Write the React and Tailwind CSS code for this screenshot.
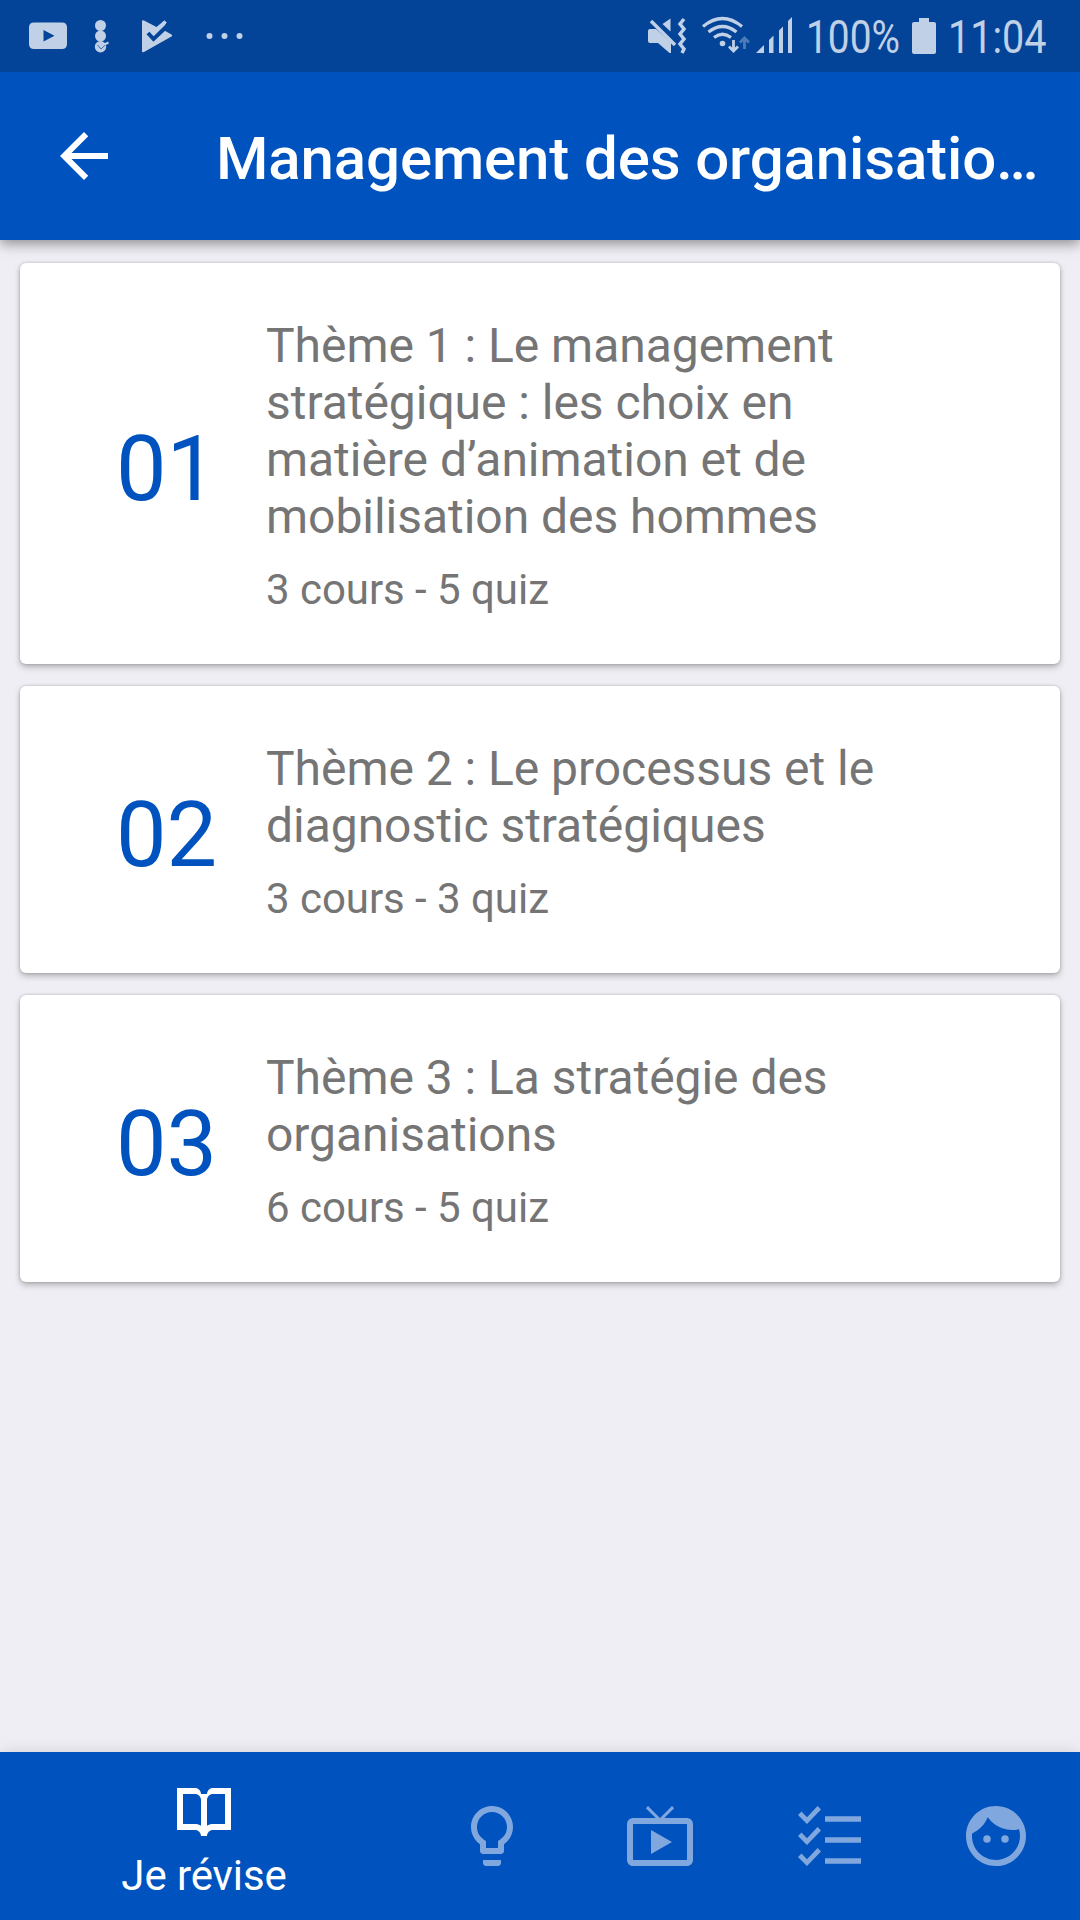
import { MdArrowBack, MdFace, MdLightbulbOutline, MdLiveTv } from "react-icons/md";

const themes = [
  {
    number: "01",
    title: "Thème 1 : Le management stratégique : les choix en matière d’animation et de mobilisation des hommes",
    info: "3 cours - 5 quiz",
  },
  {
    number: "02",
    title: "Thème 2 : Le processus et le diagnostic stratégiques",
    info: "3 cours - 3 quiz",
  },
  {
    number: "03",
    title: "Thème 3 : La stratégie des organisations",
    info: "6 cours - 5 quiz",
  },
];

function NotificationIcons() {
  return (
    <svg className="w-[270px] h-[72px]" viewBox="0 0 270 72" fill="currentColor">
      {/* youtube */}
      <path fillRule="evenodd" d="M34 22.500h28q5 0 5 5v16.500q0 5-5 5h-28q-5 0-5-5v-16.500q0-5 5-5zM43.500 30v11.500l11-5.700z" />
      {/* stacked dots */}
      <circle cx="100.500" cy="25.500" r="5.500" />
      <circle cx="100.500" cy="36" r="5.500" />
      <circle cx="100.500" cy="46.800" r="5.700" />
      <path d="M97.500 45l3.500 4l6.500-6" fill="none" stroke="#034499" strokeWidth="0.700" />
      <path d="M104.500 44.500l4-2" stroke="currentColor" strokeWidth="2" />
      {/* play with a check */}
      <path d="M142 21.500q0-2 2-1l12.500 6.500l7.800-6.500l2.200 2l-3 7.500l8 4.500q1.500 1 0 2l-27.500 15.500q-2 1-2-1z" />
      <path d="M148 33l5.500 6l11.500-11l3.500-4" fill="none" stroke="#034499" strokeWidth="4" />
      <path d="M149 28.500l5 5l11.500-12" fill="none" stroke="currentColor" strokeWidth="3" />
      <circle cx="209.500" cy="36" r="3" />
      <circle cx="224.500" cy="36" r="3" />
      <circle cx="239.500" cy="36" r="3" />
    </svg>
  );
}

function SystemIcons() {
  return (
    <svg className="w-[160px] h-[72px]" viewBox="640 0 160 72" fill="currentColor">
      {/* sound off, vibrate */}
      <path d="M648 31q0-2 2-2h6l15 13.500v10.500h-1.500l-11.500-10h-8q-2 0-2-2z" />
      <path d="M670.500 18.500v13l-8-7.500z" />
      <path d="M651 21l24 24" stroke="currentColor" strokeWidth="3.500" />
      <path d="M684 19l-4 5l4 5l-4 5l4 5l-4 5l4 5l-2 4" fill="none" stroke="currentColor" strokeWidth="3.500" />
      {/* wifi */}
      <g fill="none" stroke="currentColor" strokeWidth="3.200">
        <path d="M703 26.500q19.500-16 39 0" />
        <path d="M708.500 32q14-11 28 0" />
        <path d="M714 37.500q8.500-6.500 17 0" />
        <path d="M733.500 40v11M729 46.500l4.500 4.500l4.500-4.500" strokeWidth="2.800" />
        <path d="M744.500 49v-11M740 42.500l4.500-4.500l4.500 4.500" strokeWidth="2.800" opacity="0.400" />
      </g>
      <circle cx="722.500" cy="43.500" r="2.800" />
      {/* signal */}
      <path d="M756 53l8-8v8zM769 40l4.500-4.500v17.500h-4.500zM779 30.500l4-4v26.500h-4zM788 21l4-4v36h-4z" />
    </svg>
  );
}

function BookIcon() {
  return (
    <svg className="size-[72px]" viewBox="0 0 24 24" fill="currentColor">
      <path
        fillRule="evenodd"
        d="M3 4h6c1.100 0 2 .9 2 2h2c0-1.100.9-2 2-2h6v14h-6c-1.100 0-2 .9-2 2h-2c0-1.100-.9-2-2-2H3zM5 6v10h4c.75 0 1.450.2 2 .55V8c0-1.100-.9-2-2-2zM19 6h-4c-1.100 0-2 .9-2 2v8.550c.55-.35 1.250-.55 2-.55h4z"
      />
    </svg>
  );
}

function CheckListIcon() {
  return (
    <svg className="size-[72px]" viewBox="0 0 72 72" fill="currentColor">
      {[0, 21, 42].map((y) => (
        <g key={y} transform={`translate(0 ${y})`}>
          <path d="M6 15l9 9L29 9.500L25.600 6L15 17.200L9.500 11.600z" />
          <path d="M33 16.200h36v5.600h-36z" />
        </g>
      ))}
    </svg>
  );
}

function ThemeCard({ theme }) {
  return (
    <div className="flex items-center bg-white rounded-[6px] pt-[54px] pb-[49px] shadow-[0_3px_6px_rgba(0,0,0,0.26),0_0_3px_rgba(0,0,0,0.2)]">
      <div className="w-[246px] pl-[96px] pt-[7px] text-[90px] leading-[106px] text-[#0052be]">{theme.number}</div>
      <div className="w-[660px] text-[#757575] tracking-[-0.04px]">
        <h2 className="text-[48px] leading-[57px]">{theme.title}</h2>
        <p className="mt-[20px] text-[42px] leading-[50px]">{theme.info}</p>
      </div>
    </div>
  );
}

function App() {
  return (
    <div className="w-[1080px] h-[1920px] flex flex-col bg-[#efeef4] font-['Roboto',sans-serif] overflow-hidden">
      <div className="relative z-10 h-[72px] shrink-0 flex items-center bg-[#034499] text-[#c0d0e6]">
        <NotificationIcons />
        <div className="w-[370px]" />
        <SystemIcons />
        <span className="w-[108px] ml-[6px] pt-[2px] text-[46px] leading-[72px] origin-left scale-x-[0.845]">100%</span>
        <svg className="w-[24px] h-[36px] -ml-[2px]" viewBox="0 0 24 36" fill="currentColor">
          <path d="M7 0h10v4h5q2 0 2 2v28q0 2-2 2h-20q-2 0-2-2v-28q0-2 2-2h5z" />
        </svg>
        <span className="ml-[12px] pt-[2px] text-[46px] leading-[72px] origin-left scale-x-[0.86]">11:04</span>
      </div>

      <header className="relative h-[168px] shrink-0 flex items-center bg-[#0052be] text-white pl-[48px] shadow-[0_4px_12px_rgba(0,0,0,0.4)]">
        <MdArrowBack className="size-[72px]" />
        <h1 className="ml-[96px] pt-[5px] text-[60px] leading-[72px] font-medium tracking-[-0.13px] whitespace-nowrap">
          Management des organisatio…
        </h1>
      </header>

      <main className="flex-1 flex flex-col gap-[22px] px-[20px] pt-[23px]">
        {themes.map((theme) => (
          <ThemeCard key={theme.number} theme={theme} />
        ))}
      </main>

      <nav className="h-[168px] shrink-0 flex bg-[#0052be] text-[#80a8df] shadow-[0_0_16px_rgba(0,0,0,0.12)]">
        <button className="w-[408px] flex flex-col items-center pt-[24px] text-white">
          <BookIcon />
          <span className="mt-[3px] text-[42px] leading-[50px] tracking-[-0.1px]">Je révise</span>
        </button>
        <button className="w-[168px] flex justify-center pt-[48px]">
          <MdLightbulbOutline className="size-[72px]" />
        </button>
        <button className="w-[168px] flex justify-center pt-[48px]">
          <MdLiveTv className="size-[72px]" />
        </button>
        <button className="w-[168px] flex justify-center pt-[48px]">
          <CheckListIcon />
        </button>
        <button className="w-[168px] flex justify-center pt-[48px]">
          <MdFace className="size-[72px]" />
        </button>
      </nav>
    </div>
  );
}

export default App;
